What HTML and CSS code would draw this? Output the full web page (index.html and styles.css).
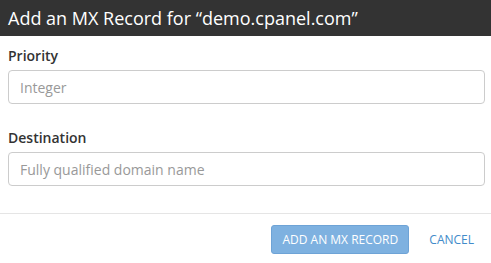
FILE: index.html
```html
<!DOCTYPE html>
<html>
<head>
    <meta charset="UTF-8">
    <title>Add an MX Record</title>
    <link rel="stylesheet" href="styles.css">
</head>
<body>
    <div class="modal">
        <div class="modal-header">
            <h3>Add an MX Record for “demo.cpanel.com”</h3>
        </div>
        <div class="modal-body">
            <div class="field">
                <label for="priority">Priority</label>
                <input type="text" id="priority" placeholder="Integer">
            </div>
            <div class="field">
                <label for="destination">Destination</label>
                <input type="text" id="destination" placeholder="Fully qualified domain name">
            </div>
        </div>
        <div class="modal-footer">
            <button class="btn btn-primary" disabled>Add an MX Record</button>
            <a class="btn-link" href="#">Cancel</a>
        </div>
    </div>
</body>
</html>
```
FILE: styles.css
```css
* { margin: 0; padding: 0; box-sizing: border-box; }
body {
    font-family: "Open Sans", "Noto Sans", sans-serif;
    color: #333;
    background: #fff;
}
.modal {
    width: 491px;
}
.modal-header {
    height: 36px;
    background: #333;
    display: flex;
    align-items: center;
    padding: 0 8px;
}
.modal-header h3 {
    color: #fff;
    font-size: 18px;
    font-weight: 400;
}
.modal-body {
    padding: 8px 6px 27px 8px;
    border-bottom: 1px solid #e5e5e5;
}
.field {
    display: flex;
    flex-direction: column;
}
.field + .field {
    margin-top: 22px;
}
.field label {
    font-size: 14px;
    font-weight: 600;
    line-height: 24px;
    margin-bottom: 2px;
}
.field input {
    height: 34px;
    border: 1px solid #ccc;
    border-radius: 4px;
    padding: 0 11px;
    font-family: inherit;
    font-size: 14px;
    color: #555;
}
.field input::placeholder {
    color: #999;
}
.modal-footer {
    display: flex;
    align-items: center;
    justify-content: flex-end;
    padding: 11px 17px 0 0;
}
.btn {
    height: 29px;
    padding: 0;
    font-family: inherit;
    font-size: 12px;
    white-space: nowrap;
    text-transform: uppercase;
    border-radius: 3px;
}
.btn-primary {
    width: 138px;
    background: #7eb1e0;
    border: 1px solid #6ea3d6;
    color: #fff;
}
.btn-link {
    margin-left: 20px;
    font-size: 12px;
    color: #428bca;
    text-decoration: none;
    text-transform: uppercase;
}
```
